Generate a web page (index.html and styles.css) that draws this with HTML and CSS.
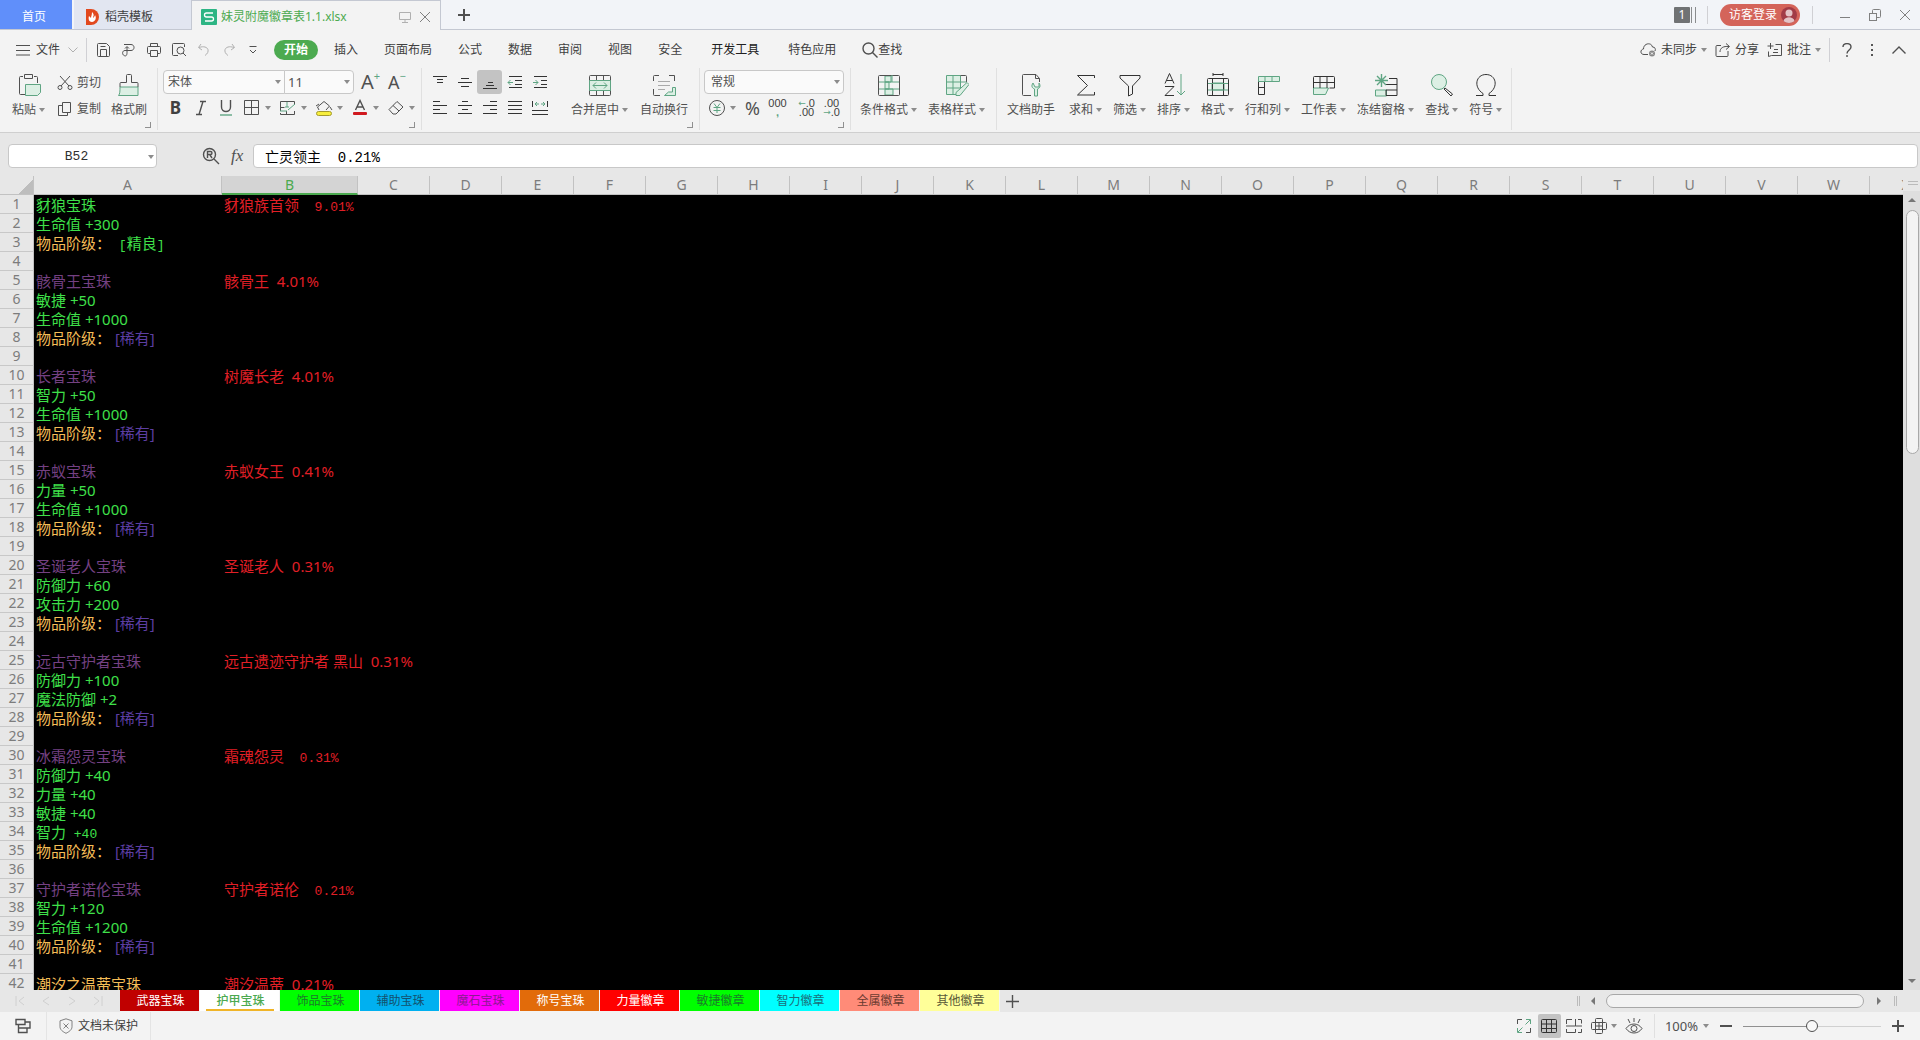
FILE: index.html
```html
<!DOCTYPE html>
<html lang="zh-CN">
<head>
<meta charset="utf-8">
<title>妹灵附魔徽章表1.1.xlsx</title>
<link rel="stylesheet" href="styles.css">
</head>
<body>
<header class="titlebar">
  <button class="home-tab">首页</button>
  <button class="doc-tab">
    <svg width="14" height="16" viewBox="0 0 14 16"><path d="M0 0h5a8 8 0 0 1 0 16H0z" fill="#e2491f"/><path d="M6 3c3 3 1 4 1 6 1-1 2-2 2-3 2 3 0 7-3 7S2 10 3 7l2 2c0-2 1-3 1-6z" fill="#fff"/></svg>
    稻壳模板
  </button>
  <div class="doc-tab active">
    <svg width="16" height="16" viewBox="0 0 16 16"><rect width="16" height="16" rx="1" fill="#2db584"/><path d="M12 4H5.500a1.500 1.500 0 0 0 0 4h5a2 2 0 0 1 0 4H4" fill="none" stroke="#fff" stroke-width="1.300"/></svg>
    <span class="doc-name">妹灵附魔徽章表1.1.xlsx</span>
    <svg class="ic faint" width="12" height="12" viewBox="0 0 12 12"><path d="M.5 1.500h11v7H.5zM6 8.500v3M3 11.500h6"/></svg>
    <button class="plain" aria-label="关闭标签"><svg class="ic mid" width="12" height="12" viewBox="0 0 12 12"><path d="M1 1l10 10M11 1L1 11"/></svg></button>
  </div>
  <button class="plain new-tab" aria-label="新建"><svg class="ic bold" width="12" height="12" viewBox="0 0 12 12"><path d="M6 0v12M0 6h12"/></svg></button>
  <div class="window-tools">
    <span class="count">1</span><span class="count-bars"></span>
    <span class="vsep"></span>
    <button class="login">访客登录
      <svg width="16" height="16" viewBox="0 0 16 16"><circle cx="8" cy="8" r="8" fill="#a23b46"/><circle cx="8" cy="6" r="3.500" fill="#e4c3c6"/><path d="M2.500 14c1-5 10-5 11 0-3 2.500-8 2.500-11 0z" fill="#e4c3c6"/></svg>
    </button>
    <span class="vsep"></span>
    <button class="plain win" aria-label="最小化"><svg class="ic mid" width="12" height="12" viewBox="0 0 12 12"><path d="M1 8.500h10"/></svg></button>
    <button class="plain win" aria-label="还原"><svg class="ic mid" width="12" height="12" viewBox="0 0 12 12"><rect x=".5" y="4.500" width="7" height="7"/><path d="M3.500 4V1.500a1 1 0 0 1 1-1h6a1 1 0 0 1 1 1v6a1 1 0 0 1-1 1H8"/></svg></button>
    <button class="plain win" aria-label="关闭"><svg class="ic mid" width="12" height="12" viewBox="0 0 12 12"><path d="M1 1l10 10M11 1L1 11"/></svg></button>
  </div>
</header>

<nav class="menubar">
  <button class="plain file"><svg class="ic" width="14" height="12" viewBox="0 0 14 12"><path d="M0 1.500h14M0 6.500h14M0 11h14"/></svg>文件<svg class="ic faint" width="10" height="6" viewBox="0 0 10 6"><path d="M.5 .5L5 5l4.500-4.500"/></svg></button>
  <span class="vsep"></span>
  <div class="quick">
    <button class="plain" aria-label="保存"><svg class="ic" width="16" height="14" viewBox="0 0 16 14"><path d="M1.500 1.500a1 1 0 0 1 1-1h8l3 3v9a1 1 0 0 1-1 1h-10a1 1 0 0 1-1-1zM4.500 13.500v-7h6v7M4.500 3.500h5"/></svg></button>
    <button class="plain" aria-label="输出为PDF"><svg class="ic" width="16" height="14" viewBox="0 0 16 14"><path d="M3 1.500h7c4 0 4 6 0 6H4c-3 0-3 4-1 5s3 0 3-3V4M4 5.500l2-2 2 2"/></svg></button>
    <button class="plain" aria-label="打印"><svg class="ic" width="16" height="14" viewBox="0 0 16 14"><path d="M4.500 3.500v-3h7v3M4 10.500H2.500a1 1 0 0 1-1-1v-5a1 1 0 0 1 1-1h11a1 1 0 0 1 1 1v5a1 1 0 0 1-1 1H12M4.500 7.500h7v6h-7z"/></svg></button>
    <button class="plain" aria-label="打印预览"><svg class="ic" width="16" height="14" viewBox="0 0 16 14"><path d="M7 12.500H2.500a1 1 0 0 1-1-1V1.500a1 1 0 0 1 1-1h10a1 1 0 0 1 1 1V4M12 10l3 3"/><circle cx="9.500" cy="7.500" r="3.500"/></svg></button>
    <button class="plain" aria-label="撤销"><svg class="ic faint" width="16" height="14" viewBox="0 0 16 14"><path d="M5 1L2.500 4.500 6 7M3 4.500c9-3 12 4 6 8"/></svg></button>
    <button class="plain" aria-label="恢复"><svg class="ic faint" width="16" height="14" viewBox="0 0 16 14"><path d="M11 1l2.500 3.500L10 7M13 4.500c-9-3-12 4-6 8"/></svg></button>
    <button class="plain" aria-label="更多"><svg class="ic" width="8" height="8" viewBox="0 0 8 8"><path d="M.5 .5h7M1 4l3 3 3-3"/></svg></button>
  </div>
  <div class="menus">
    <button class="plain current">开始</button>
    <button class="plain">插入</button>
    <button class="plain">页面布局</button>
    <button class="plain">公式</button>
    <button class="plain">数据</button>
    <button class="plain">审阅</button>
    <button class="plain">视图</button>
    <button class="plain">安全</button>
    <button class="plain wide dark">开发工具</button>
    <button class="plain wide">特色应用</button>
    <button class="plain find"><svg class="ic thick" width="16" height="16" viewBox="0 0 16 16"><circle cx="6.500" cy="6.500" r="5.500"/><path d="M10.500 10.500l5 5"/></svg>查找</button>
  </div>
  <div class="menu-right">
    <button class="plain"><svg class="ic" width="17" height="14" viewBox="0 0 17 14"><path d="M8 11.500H4C0 11.500 0 6.500 3.500 6c0-6 8-7 9-2 2.500 0 3.500 2 2.500 4"/><circle cx="12" cy="10.500" r="3" fill="#888" stroke="none"/><path d="M11 9.500l2 2M13 9.500l-2 2" stroke="#fff"/></svg>未同步<i class="caret"></i></button>
    <button class="plain"><svg class="ic" width="16" height="14" viewBox="0 0 16 14"><path d="M6 2.500H2a1 1 0 0 0-1 1v9a1 1 0 0 0 1 1h10a1 1 0 0 0 1-1V8M5 9c0-4 3-6 9-5.500M11 .5l3.500 3-3.500 3"/></svg>分享</button>
    <button class="plain"><svg class="ic" width="16" height="14" viewBox="0 0 16 14"><path d="M3.500 0v6M.5 3h6M8.500 1.500h6v11h-10l-3 1v-5M7 6.500h4M6 9.500h5"/></svg>批注<i class="caret"></i></button>
    <span class="vsep"></span>
    <button class="plain" aria-label="帮助"><svg class="ic thick" width="10" height="14" viewBox="0 0 10 14"><path d="M1 4c0-4.500 8-4.500 8 0 0 3-4 3-4 6.500M5 12v2"/></svg></button>
    <button class="plain" aria-label="选项"><svg width="4" height="14" viewBox="0 0 4 14"><path d="M1 1h2v2H1zM1 6h2v2H1zM1 11h2v2H1z" fill="#555"/></svg></button>
    <button class="plain" aria-label="收起功能区"><svg class="ic thick" width="14" height="8" viewBox="0 0 14 8"><path d="M.5 7.500L7 1l6.500 6.500"/></svg></button>
  </div>
</nav>

<section class="ribbon">
  <div class="group clipboard launch">
    <button class="plain big"><svg class="ic" width="24" height="24" viewBox="0 0 24 24"><path d="M6 3.500H3.500a1 1 0 0 0-1 1v16a1 1 0 0 0 1 1H8M17 3.500h2.500a1 1 0 0 1 1 1V10M7.500 1.500h8v4h-8z"/><path class="g gf" d="M8.500 11.500h15v8l-3 3h-12z"/></svg><span>粘贴<i class="caret"></i></span></button>
    <div class="stack">
      <button class="plain"><svg class="ic" width="16" height="16" viewBox="0 0 16 16"><path d="M3 1l9 10M13 1L4 11"/><circle cx="3" cy="12.500" r="2"/><circle cx="13" cy="12.500" r="2"/></svg>剪切</button>
      <button class="plain"><svg class="ic" width="16" height="16" viewBox="0 0 16 16"><path d="M5.500 1.500h8v10h-8zM5 4.500H1.500v10h9V12"/></svg>复制</button>
    </div>
    <button class="plain big"><svg class="ic" width="24" height="24" viewBox="0 0 24 24"><path class="g gf" d="M3 14h18v8.500H1.500C3 21 3 18 3 14z"/><path d="M3 14v-3.500a1 1 0 0 1 1-1h5.500v-7a1 1 0 0 1 1-1h3a1 1 0 0 1 1 1v7H20a1 1 0 0 1 1 1V14"/></svg><span>格式刷</span></button>
  </div>

  <div class="group font launch">
    <div class="line">
      <label class="combo name"><select aria-label="字体"><option>宋体</option></select></label>
      <label class="combo size"><select aria-label="字号"><option>11</option></select></label>
      <button class="plain grow">A<sup>+</sup></button>
      <button class="plain grow small">A<sup>−</sup></button>
    </div>
    <div class="line">
      <button class="plain cell letter-b">B</button>
      <button class="plain cell" aria-label="倾斜"><svg class="ic thick" width="12" height="16" viewBox="0 0 12 16"><path d="M5 1.500h6M1 14.500h6M8 1.500L4 14.500"/></svg></button>
      <button class="plain cell" aria-label="下划线"><svg class="ic thick" width="14" height="16" viewBox="0 0 14 16"><path d="M2.500 0v7c0 6 9 6 9 0V0"/><path class="g" d="M1 15h12"/></svg></button>
      <button class="plain drop" aria-label="边框"><svg class="ic" width="18" height="18" viewBox="0 0 18 18"><path d="M1.500 1.500h14v14h-14zM8.500 1.500v14M1.500 8.500h14"/></svg><i class="caret"></i></button>
      <button class="plain drop" aria-label="绘制边框"><svg class="ic" width="18" height="18" viewBox="0 0 18 18"><path d="M1.500 12V2.500h14V6M1.500 14v1.500h14V12M7.500 15v-3M1.500 8.500h4"/><path class="g" d="M6 8h4M8 3v5M9 11l7-6M1 12h7"/></svg><i class="caret"></i></button>
      <button class="plain drop" aria-label="填充颜色"><svg class="ic" width="18" height="18" viewBox="0 0 18 18"><path d="M4 11L2.500 8 9 2.500 14.500 7 11 11M4 5L1 7M15 8l2 3"/><rect x="1.500" y="12.500" width="15" height="4" rx="2" fill="#f7ee3c" stroke="#a49a2c"/></svg><i class="caret"></i></button>
      <button class="plain drop" aria-label="字体颜色"><svg class="ic thick" width="18" height="18" viewBox="0 0 18 18"><path d="M4.500 11L9 1.500 13.500 11M6 8h6"/><rect x="2" y="13" width="14" height="3" rx="1" fill="#d0191f" stroke="none"/></svg><i class="caret"></i></button>
      <button class="plain drop" aria-label="清除"><svg class="ic" width="18" height="18" viewBox="0 0 18 18"><path d="M2 10.500L10 2.500l6 5.500-7 7H6zM6 6.500l6 5.500"/></svg><i class="caret"></i></button>
    </div>
  </div>

  <div class="group align launch">
    <div class="stack-lines">
      <div class="line">
        <button class="plain cell" aria-label="顶端对齐"><svg class="ic dk" width="14" height="16" viewBox="0 0 14 16"><path d="M0 2.500h14M4 5.500h6M4 8.500h6"/></svg></button>
        <button class="plain cell" aria-label="垂直居中"><svg class="ic dk" width="14" height="16" viewBox="0 0 14 16"><path d="M3 4.500h8M0 8.500h14M3 12.500h8"/></svg></button>
        <button class="plain cell on" aria-label="底端对齐"><svg class="ic dk" width="14" height="16" viewBox="0 0 14 16"><path d="M5 8.500h5M3 11.500h8M0 14.500h14"/></svg></button>
        <button class="plain cell" aria-label="减少缩进"><svg class="ic dk" width="16" height="16" viewBox="0 0 16 16"><path d="M2 2.500h13M8 6.500h7M8 10.500h7M2 13.500h13"/><path class="g" d="M1 8.500h5M3.500 6L1 8.500 3.500 11"/></svg></button>
        <button class="plain cell" aria-label="增加缩进"><svg class="ic dk" width="16" height="16" viewBox="0 0 16 16"><path d="M2 2.500h13M9 6.500h6M9 10.500h6M2 13.500h13"/><path class="g" d="M1 8.500h5M3.500 6L6 8.500 3.500 11"/></svg></button>
      </div>
      <div class="line">
        <button class="plain cell" aria-label="左对齐"><svg class="ic dk" width="14" height="16" viewBox="0 0 14 16"><path d="M0 1.500h7M0 5.500h14M0 9.500h7M0 13.500h14"/></svg></button>
        <button class="plain cell" aria-label="水平居中"><svg class="ic dk" width="14" height="16" viewBox="0 0 14 16"><path d="M4 1.500h6M0 5.500h14M4 9.500h6M0 13.500h14"/></svg></button>
        <button class="plain cell" aria-label="右对齐"><svg class="ic dk" width="14" height="16" viewBox="0 0 14 16"><path d="M7 1.500h7M0 5.500h14M7 9.500h7M0 13.500h14"/></svg></button>
        <button class="plain cell" aria-label="两端对齐"><svg class="ic dk" width="14" height="16" viewBox="0 0 14 16"><path d="M0 1.500h14M0 5.500h14M0 9.500h14M0 13.500h14"/></svg></button>
        <button class="plain cell" aria-label="分散对齐"><svg class="ic dk" width="16" height="16" viewBox="0 0 16 16"><path d="M.5 1v6M15.500 1v6M0 10.500h16M0 14.500h16"/><path class="g" d="M3 4h4M9 4h4M5 2L3 4l2 2M11 2l2 2-2 2"/></svg></button>
      </div>
    </div>
    <button class="plain big"><svg class="ic" width="24" height="24" viewBox="0 0 24 24"><rect x="1.500" y="2.500" width="21" height="20" rx="1"/><path d="M8.500 2v5M15.500 2v5M8.500 18v5M15.500 18v5"/><path class="g gf" d="M1.500 7.500h21v10h-21z"/><path class="g" d="M5 12.500h14M8 9.500l-3 3 3 3M16 9.500l3 3-3 3"/></svg><span>合并居中<i class="caret"></i></span></button>
    <button class="plain big"><svg class="ic" width="24" height="24" viewBox="0 0 24 24"><path d="M1.500 8V3.500a1 1 0 0 1 1-1H7M17 2.500h5.500V8M1.500 16v5.500a1 1 0 0 0 1 1H8"/><path d="M6 8.500h12M6 12.500h12M6 16.500h7" stroke="#aaa"/><path class="g gf" d="M20.500 14.500h3v8h-11l4-3.500h4z"/></svg><span>自动换行</span></button>
  </div>

  <div class="group number launch">
    <div class="line"><label class="combo fmt"><select aria-label="数字格式"><option>常规</option></select></label></div>
    <div class="line">
      <button class="plain drop" aria-label="货币"><svg class="ic" width="18" height="18" viewBox="0 0 18 18"><circle cx="9" cy="9" r="7.500"/><path class="g" d="M6 4.500l3 4 3-4M5.500 8.500h7M5.500 11.500h7M9 8.500V14"/></svg><i class="caret"></i></button>
      <button class="plain cell pct">%</button>
      <button class="plain cell digits"><span>000</span><b>,</b></button>
      <button class="plain cell digits gap-l"><span><i>←</i>.0</span><span>.00</span></button>
      <button class="plain cell digits"><span>.00</span><span><i>→</i>.0</span></button>
    </div>
  </div>

  <div class="group styles">
    <button class="plain big"><svg class="ic" width="24" height="24" viewBox="0 0 24 24"><path class="g gf" d="M8 3h6v6H8zM8 9h4v7H8zM8 16h8v6H8z"/><rect x="1.500" y="2.500" width="21" height="20" rx="1"/><path class="g" d="M2 9h20M2 16h20M15 2v7"/></svg><span>条件格式<i class="caret"></i></span></button>
    <button class="plain big"><svg class="ic" width="24" height="24" viewBox="0 0 24 24"><path class="g gf" d="M1.500 2.500h14v19h-14z"/><path d="M15.500 2.500h5a1 1 0 0 1 1 1V9"/><path class="g" d="M1.500 9h20M1.500 15h14M8 2.500v19"/><path class="g gf" d="M22 9.500l2 2-9 11h-4v-3z"/></svg><span>表格样式<i class="caret"></i></span></button>
  </div>

  <div class="group tools">
    <button class="plain big"><svg class="ic" width="24" height="24" viewBox="0 0 24 24"><path d="M12 22.500H4.500a1 1 0 0 1-1-1v-19a1 1 0 0 1 1-1H17l3.500 4V9M16.500 1.500v4h4"/><path class="g gf" d="M14 10c-2 3-1 5 1.500 6v7h3v-7c3-1 3-4 1.500-6v4h-4l-2-4z"/></svg><span>文档助手</span></button>
    <button class="plain big"><svg class="ic dk" width="24" height="24" viewBox="0 0 24 24"><path d="M20.500 5V2.500h-17l10 10-10 9.500h17V19"/></svg><span>求和<i class="caret"></i></span></button>
    <button class="plain big"><svg class="ic dk" width="24" height="24" viewBox="0 0 24 24"><path d="M2 2.500h20V5l-7.500 8v8l-4 2V13L2 5z"/></svg><span>筛选<i class="caret"></i></span></button>
    <button class="plain big"><svg class="ic dk" width="24" height="24" viewBox="0 0 24 24"><path d="M3 10.500L7.500 .5 12 10.500M4.500 7.500h6M3 13.500h9l-9 9h9"/><path class="g" d="M19 1v21M15 18l4 4 4-4"/></svg><span>排序<i class="caret"></i></span></button>
    <button class="plain big"><svg class="ic dk" width="24" height="24" viewBox="0 0 24 24"><path class="g gf" d="M6 10h12v7H6z"/><rect x="1.500" y="5.500" width="21" height="17" rx="1"/><path d="M6.500 5v18M17.500 5v18M7 1.500h10M7 0v3M17 0v3"/><path class="g" d="M2 10.500h20M2 17h20"/></svg><span>格式<i class="caret"></i></span></button>
    <button class="plain big"><svg class="ic dk" width="24" height="24" viewBox="0 0 24 24"><path d="M2.500 8v13.500h6V8M2.500 14.500h6"/><path class="g gf" d="M2.500 3.500h21v5h-21z"/><path class="g" d="M9 3v5M16 3v5"/></svg><span>行和列<i class="caret"></i></span></button>
    <button class="plain big"><svg class="ic dk" width="24" height="24" viewBox="0 0 24 24"><path class="g gf" d="M1.500 15h15l-3 6.500h-12z"/><path d="M1.500 15V4.500a1 1 0 0 1 1-1h19a1 1 0 0 1 1 1V15h-5M8 3.500V15M15 3.500V15M1.500 9.500h21"/></svg><span>工作表<i class="caret"></i></span></button>
    <button class="plain big"><svg class="ic dk" width="24" height="24" viewBox="0 0 24 24"><path class="g gf" d="M1.500 17h11v6h-11z"/><path d="M15 5.500h8v17H12V17h11M12 11.500h11"/><path class="g thick" d="M7.500 1v13M1 7.500h13M3 3l9 9M12 3l-9 9"/></svg><span>冻结窗格<i class="caret"></i></span></button>
    <button class="plain big"><svg class="ic dk" width="24" height="24" viewBox="0 0 24 24"><circle class="g gf" cx="9" cy="9" r="7.500"/><path d="M15 15l7.500 6-1.500 2-7-7z"/></svg><span>查找<i class="caret"></i></span></button>
    <button class="plain big"><svg class="ic dk" width="24" height="24" viewBox="0 0 24 24"><path d="M2 22.500h7v-2C-1 14 2 1.500 12 1.500S25 14 15 20.500v2h7"/></svg><span>符号<i class="caret"></i></span></button>
  </div>
</section>

<section class="formula-bar">
  <label class="name-box"><input aria-label="名称框" value="B52"></label>
  <div class="fx-tools">
    <svg class="ic thick" width="18" height="18" viewBox="0 0 18 18"><circle cx="7.500" cy="7.500" r="6"/><path d="M12 12l5 5M5.500 11V4.500h3c2 0 2 3 0 3h-3M8 8l2 3"/></svg>
    <button class="plain fx">fx</button>
  </div>
  <input class="formula" aria-label="编辑栏" value="亡灵领主  0.21%">
</section>

<main class="workspace">
  <div class="sheet">
    <table class="grid">
      <colgroup><col class="c-head"><col class="c-a"><col class="c-b"><col span="22" class="c-n"></colgroup>
      <thead>
        <tr><th class="corner"></th><th>A</th><th class="sel">B</th><th>C</th><th>D</th><th>E</th><th>F</th><th>G</th><th>H</th><th>I</th><th>J</th><th>K</th><th>L</th><th>M</th><th>N</th><th>O</th><th>P</th><th>Q</th><th>R</th><th>S</th><th>T</th><th>U</th><th>V</th><th>W</th><th>X</th></tr>
      </thead>
      <tbody>
        <tr><th>1</th><td class="green">豺狼宝珠</td><td class="red">豺狼族首领<span class="song">  9.01%</span></td></tr>
        <tr><th>2</th><td class="green">生命值 +300</td><td></td></tr>
        <tr><th>3</th><td class="gold">物品阶级：<span class="green"><span class="song"> [</span>精良<span class="song">]</span></span></td><td></td></tr>
        <tr><th>4</th><td></td><td></td></tr>
        <tr><th>5</th><td class="purple">骸骨王宝珠</td><td class="red">骸骨王  4.01%</td></tr>
        <tr><th>6</th><td class="green">敏捷 +50</td><td></td></tr>
        <tr><th>7</th><td class="green">生命值 +1000</td><td></td></tr>
        <tr><th>8</th><td class="gold">物品阶级： <span class="violet">[稀有]</span></td><td></td></tr>
        <tr><th>9</th><td></td><td></td></tr>
        <tr><th>10</th><td class="purple">长者宝珠</td><td class="red">树魔长老  4.01%</td></tr>
        <tr><th>11</th><td class="green">智力 +50</td><td></td></tr>
        <tr><th>12</th><td class="green">生命值 +1000</td><td></td></tr>
        <tr><th>13</th><td class="gold">物品阶级： <span class="violet">[稀有]</span></td><td></td></tr>
        <tr><th>14</th><td></td><td></td></tr>
        <tr><th>15</th><td class="purple">赤蚁宝珠</td><td class="red">赤蚁女王  0.41%</td></tr>
        <tr><th>16</th><td class="green">力量 +50</td><td></td></tr>
        <tr><th>17</th><td class="green">生命值 +1000</td><td></td></tr>
        <tr><th>18</th><td class="gold">物品阶级： <span class="violet">[稀有]</span></td><td></td></tr>
        <tr><th>19</th><td></td><td></td></tr>
        <tr><th>20</th><td class="purple">圣诞老人宝珠</td><td class="red">圣诞老人  0.31%</td></tr>
        <tr><th>21</th><td class="green">防御力 +60</td><td></td></tr>
        <tr><th>22</th><td class="green">攻击力 +200</td><td></td></tr>
        <tr><th>23</th><td class="gold">物品阶级： <span class="violet">[稀有]</span></td><td></td></tr>
        <tr><th>24</th><td></td><td></td></tr>
        <tr><th>25</th><td class="purple">远古守护者宝珠</td><td class="red">远古遗迹守护者 黑山  0.31%</td></tr>
        <tr><th>26</th><td class="green">防御力 +100</td><td></td></tr>
        <tr><th>27</th><td class="green">魔法防御 +2</td><td></td></tr>
        <tr><th>28</th><td class="gold">物品阶级： <span class="violet">[稀有]</span></td><td></td></tr>
        <tr><th>29</th><td></td><td></td></tr>
        <tr><th>30</th><td class="purple">冰霜怨灵宝珠</td><td class="red">霜魂怨灵<span class="song">  0.31%</span></td></tr>
        <tr><th>31</th><td class="green">防御力 +40</td><td></td></tr>
        <tr><th>32</th><td class="green">力量 +40</td><td></td></tr>
        <tr><th>33</th><td class="green">敏捷 +40</td><td></td></tr>
        <tr><th>34</th><td class="green">智力<span class="song"> +40</span></td><td></td></tr>
        <tr><th>35</th><td class="gold">物品阶级： <span class="violet">[稀有]</span></td><td></td></tr>
        <tr><th>36</th><td></td><td></td></tr>
        <tr><th>37</th><td class="purple">守护者诺伦宝珠</td><td class="red">守护者诺伦<span class="song">  0.21%</span></td></tr>
        <tr><th>38</th><td class="green">智力 +120</td><td></td></tr>
        <tr><th>39</th><td class="green">生命值 +1200</td><td></td></tr>
        <tr><th>40</th><td class="gold">物品阶级： <span class="violet">[稀有]</span></td><td></td></tr>
        <tr><th>41</th><td></td><td></td></tr>
        <tr><th>42</th><td class="gold">潮汐之温蒂宝珠</td><td class="red">潮汐温蒂  0.21%</td></tr>
      </tbody>
    </table>
  </div>
  <div class="vscroll">
    <span class="split"></span>
    <button class="plain arrow" aria-label="向上"><i class="tri up"></i></button>
    <div class="track"><div class="thumb"></div></div>
    <button class="plain arrow" aria-label="向下"><i class="tri down"></i></button>
  </div>
</main>

<section class="sheet-tabs">
  <div class="tab-nav">
    <button class="plain" aria-label="第一张"><svg class="ic" width="10" height="10" viewBox="0 0 10 10"><path d="M1 0v10M9 1L4 5l5 4"/></svg></button>
    <button class="plain" aria-label="上一张"><svg class="ic" width="10" height="10" viewBox="0 0 10 10"><path d="M8 1L2 5l6 4"/></svg></button>
    <button class="plain" aria-label="下一张"><svg class="ic" width="10" height="10" viewBox="0 0 10 10"><path d="M2 1l6 4-6 4"/></svg></button>
    <button class="plain" aria-label="最后一张"><svg class="ic" width="10" height="10" viewBox="0 0 10 10"><path d="M9 0v10M1 1l5 4-5 4"/></svg></button>
  </div>
  <button class="tab t-crimson">武器宝珠</button>
  <button class="tab t-active">护甲宝珠</button>
  <button class="tab t-lime">饰品宝珠</button>
  <button class="tab t-blue">辅助宝珠</button>
  <button class="tab t-magenta">魔石宝珠</button>
  <button class="tab t-orange">称号宝珠</button>
  <button class="tab t-red">力量徽章</button>
  <button class="tab t-lime">敏捷徽章</button>
  <button class="tab t-cyan">智力徽章</button>
  <button class="tab t-salmon">全属徽章</button>
  <button class="tab t-yellow">其他徽章</button>
  <button class="plain add" aria-label="新建工作表"><svg class="ic thick" width="13" height="13" viewBox="0 0 13 13"><path d="M6.500 0v13M0 6.500h13"/></svg></button>
  <div class="hscroll">
    <span class="grip"></span>
    <button class="plain harrow" aria-label="向左"><i class="tri left"></i></button>
    <div class="hthumb"></div>
    <button class="plain harrow" aria-label="向右"><i class="tri right"></i></button>
    <span class="grip"></span>
  </div>
</section>

<footer class="status">
  <button class="plain mode" aria-label="录制"><svg class="ic thick" width="16" height="16" viewBox="0 0 16 16"><path d="M1 1.500h9v5H1zM3.500 6.500v8H12V10H3.500M10 4h5v6h-3"/></svg></button>
  <button class="plain protect"><svg class="ic mid" width="14" height="16" viewBox="0 0 14 16"><path d="M7 .8l6 2v6c0 3-3 5-6 6.500-3-1.500-6-3.500-6-6.500v-6z"/><path d="M4.500 5.500l5 5M9.500 5.500l-5 5"/></svg>文档未保护</button>
  <div class="views">
    <button class="plain view" aria-label="全屏"><svg class="ic" width="16" height="16" viewBox="0 0 16 16"><path d="M1.500 6V1.500H6M14.500 10v4.500H10"/><path class="g" d="M10 1.500h4.500V6M14 2L9.500 6.500M1.500 10v4.500H6M2 14l4.500-4.500"/></svg></button>
    <button class="plain view on" aria-label="普通视图"><svg class="ic dk" width="16" height="16" viewBox="0 0 16 16"><rect x=".5" y="1.500" width="15" height="13" rx="1"/><path d="M5.500 1v13M10.500 1v13M0 6h16M0 10.500h16"/></svg></button>
    <button class="plain view" aria-label="分页预览"><svg class="ic" width="16" height="16" viewBox="0 0 16 16"><path d="M.5 6V1.500H6M9.500 1v7H0M9.500 8H16M15.500 1.500v4M12 1.500h3M.5 11v3.500h9V11M15.500 11v3.500H12"/></svg></button>
    <button class="plain view" aria-label="阅读模式"><svg class="ic" width="16" height="16" viewBox="0 0 16 16"><rect x="4.500" y=".5" width="7" height="15" rx="1"/><rect x=".5" y="4.500" width="15" height="7" rx="1"/><path d="M8 4v8M4 8h8"/></svg><i class="caret"></i></button>
    <button class="plain view" aria-label="护眼模式"><svg class="ic" width="18" height="16" viewBox="0 0 18 16"><path d="M1 10.500c4-6 12-6 16 0-4 6-12 6-16 0zM9 0v4M3 1l2 4M15 1l-2 4"/><circle cx="9" cy="10.500" r="3"/></svg></button>
  </div>
  <div class="zoom">
    <button class="plain">100%<i class="caret"></i></button>
    <button class="plain" aria-label="缩小"><svg class="ic bold" width="12" height="12" viewBox="0 0 12 12"><path d="M0 6h12"/></svg></button>
    <input type="range" aria-label="缩放" min="0" max="100" value="50">
    <button class="plain" aria-label="放大"><svg class="ic bold" width="12" height="12" viewBox="0 0 12 12"><path d="M6 0v12M0 6h12"/></svg></button>
  </div>
</footer>
</body>
</html>
```
FILE: styles.css
```css
* { box-sizing: border-box; }

body {
  margin: 0;
  height: 100vh;
  display: flex;
  flex-direction: column;
  overflow: hidden;
  background: #f3f3f3;
  color: #505050;
  font: 12px/18px "Noto Sans", "Noto Sans CJK SC", sans-serif;
}

button, input, select { font: inherit; color: inherit; margin: 0; }
svg { display: block; flex: none; }

.plain {
  display: flex;
  align-items: center;
  flex: none;
  padding: 0;
  border: 0;
  background: none;
  white-space: nowrap;
}

/* Line icons */
.ic { fill: none; stroke: #505050; stroke-width: 1; }
.ic.thick, .ic .thick { stroke-width: 1.4; }
.ic.bold { stroke-width: 2; }
.ic.mid { stroke: #808080; }
.ic.faint { stroke: #b0b0b0; }
.ic.dk { stroke: #333; }
.ic .g { stroke: #5fa583; }
.ic .gf { fill: #dcefe4; }

.caret {
  flex: none;
  width: 6px;
  border: solid transparent;
  border-width: 4px 3px 0;
  border-top-color: #8c8c8c;
}

.vsep { flex: none; width: 1px; height: 18px; background: #d0d0d4; }

/* Title bar */
.titlebar {
  display: flex;
  flex: none;
  height: 30px;
  background: #f2f4f8;
  border-bottom: 1px solid #c4c8d2;
}
.home-tab { width: 72px; border: 0; padding: 4px 0 0 22px; background: #608ffa; color: #fff; text-align: left; }
.doc-tab {
  display: flex;
  align-items: center;
  gap: 5px;
  width: 120px;
  padding: 4px 12px 0;
  border: 0;
  background: #e2e6f1;
  color: #404040;
}
.home-tab + .doc-tab { margin-left: 2px; }
.doc-tab.active {
  width: 250px;
  height: 30px;
  margin-left: -3px;
  padding: 2px 9px 0;
  gap: 4px;
  border: 1px solid #c4c8d2;
  border-bottom: 0;
  background: #f3f3f3;
  color: #4caa50;
}
.doc-name { flex: 1; }
.doc-tab .plain { margin-left: 4px; }
.new-tab { margin-left: 17px; }
.window-tools { display: flex; align-items: center; margin-left: auto; }
.count { width: 16px; height: 16px; background: #707274; color: #fff; text-align: center; line-height: 16px; border-radius: 1px; }
.count-bars { width: 5px; height: 16px; margin: 0 11px 0 1px; border: solid #8a8c8e; border-width: 0 1px; }
.login {
  display: flex;
  align-items: center;
  gap: 4px;
  height: 22px;
  margin: 0 12px;
  padding: 0 3px 0 9px;
  border: 0;
  border-radius: 11px;
  background: #d4645a;
  color: #fff;
}
.win { width: 30px; justify-content: center; }
.window-tools .vsep + .win { margin-left: 17px; }

/* Menu bar */
.menubar { display: flex; flex: none; align-items: center; height: 38px; padding: 1px 14px 0 16px; }
.menubar .vsep { height: 24px; }
.file { gap: 6px; color: #404040; }
.file svg:last-child { margin-left: 2px; }
.menubar > .vsep { margin-left: 8px; }
.quick { display: flex; margin-left: 9px; gap: 9px; }
.quick .plain { height: 18px; }
.quick .plain:last-child { margin-left: 3px; }
.menus { display: flex; align-items: center; gap: 26px; margin-left: 17px; color: #404040; }
.menus .current { height: 20px; margin-right: -10px; padding: 0 10px; border-radius: 10px; background: #4caa50; color: #fff; font-weight: bold; }
.menus .wide { margin-left: 3px; }
.menus .dark { color: #202020; }
.menus .find { gap: 0; }
.menu-right { display: flex; align-items: center; margin-left: auto; gap: 8px; }
.menu-right .plain { gap: 4px; color: #404040; }
.menu-right .vsep { margin-right: 4px; }
.menu-right .vsep ~ .plain { margin-right: 10px; }
.menu-right .vsep ~ .plain:last-child { margin-right: 0; }

/* Ribbon */
.ribbon { display: flex; flex: none; height: 65px; border-bottom: 1px solid #cfcfcf; }
.group { position: relative; flex: none; height: 62px; border-right: 1px solid #e0e0e0; }
.launch::after {
  content: "";
  position: absolute;
  right: 6px;
  bottom: 2px;
  width: 5px;
  height: 5px;
  border: solid #909090;
  border-width: 0 1px 1px 0;
}
.big { flex-direction: column; gap: 4px; padding-top: 5px; height: 54px; }
.big span { display: flex; align-items: center; gap: 3px; }
.line { display: flex; align-items: center; height: 26px; }
.cell { width: 25px; height: 24px; justify-content: center; }
.cell.on { background: #c3c3c3; border-radius: 3px; }
.drop { width: 36px; height: 24px; padding-left: 5px; gap: 4px; }

.clipboard { display: flex; width: 158px; padding-left: 12px; }
.stack { margin: 2px 10px 0 12px; }
.stack .plain { height: 26px; gap: 4px; }

.font { width: 264px; padding: 1px 0 0 5px; }
.combo { position: relative; display: block; height: 24px; border: 1px solid #c8c8c8; background: #fafafa; }
.combo::after {
  content: "";
  position: absolute;
  right: 3px;
  top: 9px;
  border: solid transparent;
  border-width: 4px 3px 0;
  border-top-color: #8c8c8c;
}
.combo select { width: 100%; height: 22px; padding: 0 4px; border: 0; background: none; appearance: none; }
.combo.name { width: 122px; border-radius: 4px 0 0 4px; }
.combo.size { width: 70px; margin-left: -1px; border-radius: 0 4px 4px 0; }
.combo.size select { padding-left: 3px; font-size: 13px; }
.combo.fmt { width: 140px; border-radius: 4px; }
.combo.fmt select { padding-left: 6px; }
.grow { margin-left: 7px; font: 20px/24px "Noto Sans", sans-serif; }
.grow.small { margin-left: 8px; font-size: 18px; }
.grow sup { align-self: flex-start; font-size: 11px; line-height: 12px; color: #5fa583; }
.letter-b { font: bold 17px/24px "Noto Sans", sans-serif; color: #404040; }

.align { display: flex; width: 278px; padding-left: 5px; }
.stack-lines { padding-top: 1px; margin-right: 19px; }
.align .big + .big { margin-left: 12px; }

.number { width: 151px; padding: 1px 0 0 4px; }
.number .drop { padding-left: 4px; }
.pct { font-size: 18px; }
.digits { flex-direction: column; font: 11px/9px "Liberation Sans", sans-serif; color: #404040; }
.digits span { display: flex; }
.digits i { font: 9px/9px "DejaVu Sans", sans-serif; color: #5fa583; }
.digits b { color: #5fa583; }
.gap-l { margin-left: 4px; }

.styles { display: flex; gap: 11px; width: 146px; padding-left: 9px; }
.tools { display: flex; gap: 11px; padding: 0 9px 0 10px; }
.tools .plain:first-child { margin-right: 3px; }

/* Formula bar */
.formula-bar { display: flex; flex: none; height: 43px; padding: 11px 2px 8px 8px; background: #e7e7e7; }
.name-box { position: relative; width: 149px; }
.name-box::after {
  content: "";
  position: absolute;
  right: 3px;
  top: 11px;
  border: solid transparent;
  border-width: 4px 3px 0;
  border-top-color: #8c8c8c;
}
.name-box input, .formula {
  width: 100%;
  height: 24px;
  border: 1px solid #c8c8c8;
  border-radius: 4px;
  background: #fff;
  color: #303030;
  font: 13px/20px "Liberation Mono", "Noto Sans CJK SC", monospace;
}
.name-box input { text-align: center; padding: 0 12px 0 0; }
.formula { flex: 1; padding: 0 11px; font-size: 14px; color: #000; }
.fx-tools { display: flex; align-items: center; gap: 11px; margin-left: 45px; width: 51px; height: 24px; }
.fx { font: italic 17px/24px "Liberation Serif", serif; }

/* Sheet */
.workspace { display: flex; flex: 1; min-height: 0; background: #000; }
.sheet { flex: 1; min-width: 0; overflow: hidden; background: linear-gradient(#e7e7e7 19px, #000 19px); }
.grid { width: 1942px; table-layout: fixed; border-collapse: separate; border-spacing: 0; }
.c-head { width: 34px; }
.c-a { width: 188px; }
.c-b { width: 136px; }
.c-n { width: 72px; }
.grid th, .grid td { height: 19px; padding: 0; font-weight: normal; line-height: 18px; white-space: pre; }
.grid thead th { border-right: 1px solid #c2c2c2; border-bottom: 1px solid #c2c2c2; background: #e7e7e7; color: #7c7c7c; font-size: 14px; }
.grid thead th.sel { background: #d4d4d4; border-bottom: 2px solid #4caa50; color: #4caa50; line-height: 17px; }
.grid thead th.corner { background: linear-gradient(135deg, #e7e7e7 72%, #bdbdbd 72%); }
.grid tbody th { border-bottom: 1px solid #c8c8c8; border-right: 1px solid #c2c2c2; background: #e7e7e7; color: #7c7c7c; font-size: 14px; }
.grid td { padding-left: 2px; font-size: 15px; overflow: visible; }
.song { font-family: "Liberation Mono", "Noto Sans CJK SC", monospace; font-size: 13px; line-height: 10px; }
.green { color: #3fe04a; }
.gold { color: #f5bd57; }
.purple { color: #744082; }
.violet { color: #5c3ea2; }
.red { color: #e01f26; }

.vscroll { display: flex; flex-direction: column; flex: none; width: 17px; background: #dedede; }
.split { height: 15px; background: linear-gradient(#bbb 1px, transparent 1px 3px, #bbb 3px 4px, transparent 4px) 5px 5px / 10px 10px no-repeat #e7e7e7; }
.arrow { justify-content: center; height: 18px; }
.track { flex: 1; padding: 1px 1px 0 3px; }
.thumb { height: 32%; border: 1px solid #a8a8a8; border-radius: 7px; background: #f3f3f3; }
.tri { border: 4px solid transparent; }
.tri.up { border-top: 0; border-bottom-color: #777; }
.tri.down { border-bottom: 0; border-top-color: #777; }
.tri.left { border-left: 0; border-right-color: #777; }
.tri.right { border-right: 0; border-left-color: #777; }

/* Sheet tabs */
.sheet-tabs { display: flex; flex: none; height: 22px; background: #e7e7e7; }
.tab-nav { display: flex; align-items: center; gap: 16px; width: 120px; padding-left: 15px; }
.tab-nav .ic { stroke: #d0d0d0; }
.tab { width: 80px; height: 22px; padding: 0 0 0 2px; border: solid #f3f3f3; border-width: 0 1px 1px 0; font-size: 12px; line-height: 20px; }
.t-crimson { background: #c00000; color: #fff; }
.t-active { background: linear-gradient(#f0b428, #f0b428) center 19px / 68px 2px no-repeat #fff; color: #4caa50; font-weight: 500; }
.t-lime { background: #00ff00; color: #1c7a2a; }
.t-blue { background: #00b0f0; color: #13506e; }
.t-magenta { background: #ff00ff; color: #8a1a90; }
.t-orange { background: #e26b0a; color: #fff; }
.t-red { background: #ff0000; color: #fff; }
.t-cyan { background: #00ffff; color: #1c6f7a; }
.t-salmon { background: #ff8b78; color: #6a3a30; }
.t-yellow { background: #ffff99; color: #5a5a38; }
.add { margin-left: 6px; }
.hscroll { display: flex; align-items: center; margin-left: auto; padding-right: 23px; }
.grip { width: 3px; height: 10px; border: solid #bbb; border-width: 0 1px; }
.harrow { width: 26px; justify-content: center; }
.hthumb { width: 258px; height: 14px; border: 1px solid #a8a8a8; border-radius: 7px; background: #f3f3f3; }
.hscroll .harrow:last-of-type { width: 30px; }

/* Status bar */
.status { display: flex; flex: none; align-items: center; height: 28px; padding: 0 16px 0 15px; background: #f3f3f3; }
.mode { width: 32px; height: 28px; border-right: 1px solid #e4e4e4; }
.protect { gap: 5px; height: 28px; padding: 0 12px; border-right: 1px solid #e4e4e4; color: #404040; }
.views { display: flex; align-items: center; margin-left: auto; gap: 2px; padding-right: 8px; border-right: 1px solid #e0e0e0; }
.view { min-width: 23px; height: 24px; justify-content: center; gap: 4px; }
.view:nth-child(4) { padding-left: 3px; margin-right: 4px; }
.view.on { background: #c3c3c3; border-radius: 2px; }
.zoom { display: flex; align-items: center; gap: 11px; padding-left: 10px; }
.zoom .plain { gap: 5px; font-size: 13px; }
.zoom input { width: 138px; height: 16px; appearance: none; background: linear-gradient(90deg, #909090 50%, #d0d0d0 50%) 0 8px / 100% 1px no-repeat; }
.zoom input::-webkit-slider-thumb { appearance: none; width: 12px; height: 12px; border: 1px solid #505050; border-radius: 50%; background: #f8f8f8; }
```
